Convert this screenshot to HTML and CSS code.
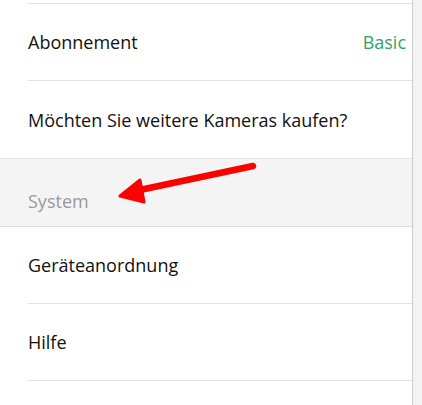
FILE: index.html
```html
<!DOCTYPE html>
<html lang="de">
<head>
    <meta charset="UTF-8">
    <meta name="viewport" content="width=device-width, initial-scale=1.0">
    <title>Einstellungen</title>
    <link rel="stylesheet" href="styles.css">
</head>
<body>
    <div class="page">
        <div class="settings">
            <div class="row row-cut"></div>

            <div class="row">
                <span class="label">Abonnement</span>
                <span class="value">Basic</span>
            </div>

            <div class="row row-last">
                <span class="label">Möchten Sie weitere Kameras kaufen?</span>
            </div>

            <div class="section">System</div>

            <div class="row">
                <span class="label">Geräteanordnung</span>
            </div>

            <div class="row">
                <span class="label">Hilfe</span>
            </div>
        </div>
        <div class="scroll-track"></div>
    </div>

    <!-- annotation arrow drawn over the screenshot -->
    <svg class="arrow" width="422" height="405" viewBox="0 0 422 405">
        <line x1="253" y1="166" x2="135" y2="191" stroke="#ff0000" stroke-width="6.5" stroke-linecap="round"/>
        <polygon points="120,196 140,180 144,202" fill="#ff0000" stroke="#ff0000" stroke-width="3" stroke-linejoin="round"/>
    </svg>
</body>
</html>
```

FILE: styles.css
```css
:root {
    --text-color: #111111;
    --muted-color: #999999;
    --accent-green: #2fa565;
    --line-color: #e3e3e3;
    --section-bg: #f4f4f4;
    --track-bg: #f3f3f3;
    --track-border: #cdcdcd;
}

body {
    margin: 0;
    font-family: 'Open Sans', 'Noto Sans', sans-serif;
    font-size: 18px;
    line-height: 24px;
    color: var(--text-color);
    background-color: #ffffff;
}

.page {
    display: flex;
    min-height: 405px;
}

.settings {
    width: 412px;
    border-right: 1px solid var(--track-border);
    background-color: #ffffff;
}

.scroll-track {
    flex: 1;
    background-color: var(--track-bg);
}

.row {
    display: flex;
    align-items: center;
    justify-content: space-between;
    height: 76px;
    margin-left: 28px;
    padding-right: 6px;
    border-bottom: 1px solid var(--line-color);
}
.row-cut {
    height: 3px;
}
.row-last {
    height: 77px;
    border-bottom: none;
}

.value {
    color: var(--accent-green);
}

.section {
    background-color: var(--section-bg);
    border-top: 1px solid var(--line-color);
    border-bottom: 1px solid #dcdcdc;
    padding: 30px 28px 13px;
    color: var(--muted-color);
}

.arrow {
    position: absolute;
    top: 0;
    left: 0;
    pointer-events: none;
}
```
